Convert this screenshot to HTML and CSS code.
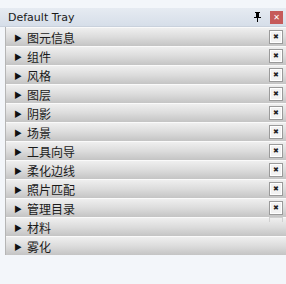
FILE: index.html
```html
<!DOCTYPE html>
<html lang="en">
<head>
    <meta charset="UTF-8">
    <title>Default Tray</title>
    <link rel="stylesheet" href="styles.css">
</head>
<body>
    <div class="tray">
        <div class="title-bar">
            <span class="title">Default Tray</span>
            <span class="pin">
                <svg width="9" height="10" viewBox="0 0 9 10"><path d="M2 0h5v1H6v4h2v1H5v4H4V6H1V5h2V1H2z" fill="#000"/></svg>
            </span>
            <span class="close">&#x2715;</span>
        </div>
        <div class="panels">
            <div class="panel"><span class="arrow">&#9654;</span><span class="label">图元信息</span><span class="x">&#x2716;</span></div>
            <div class="panel"><span class="arrow">&#9654;</span><span class="label">组件</span><span class="x">&#x2716;</span></div>
            <div class="panel"><span class="arrow">&#9654;</span><span class="label">风格</span><span class="x">&#x2716;</span></div>
            <div class="panel"><span class="arrow">&#9654;</span><span class="label">图层</span><span class="x">&#x2716;</span></div>
            <div class="panel"><span class="arrow">&#9654;</span><span class="label">阴影</span><span class="x">&#x2716;</span></div>
            <div class="panel"><span class="arrow">&#9654;</span><span class="label">场景</span><span class="x">&#x2716;</span></div>
            <div class="panel"><span class="arrow">&#9654;</span><span class="label">工具向导</span><span class="x">&#x2716;</span></div>
            <div class="panel"><span class="arrow">&#9654;</span><span class="label">柔化边线</span><span class="x">&#x2716;</span></div>
            <div class="panel"><span class="arrow">&#9654;</span><span class="label">照片匹配</span><span class="x">&#x2716;</span></div>
            <div class="panel"><span class="arrow">&#9654;</span><span class="label">管理目录</span><span class="x">&#x2716;</span></div>
            <div class="panel"><span class="arrow">&#9654;</span><span class="label">材料</span><span class="x partial"></span></div>
            <div class="panel"><span class="arrow">&#9654;</span><span class="label">雾化</span></div>
        </div>
    </div>
</body>
</html>
```

FILE: styles.css
```css
body {
    margin: 0;
    padding-top: 8px;
    background-color: #f3f6fa;
    font-family: "Noto Sans CJK SC", "Liberation Sans", sans-serif;
    width: 286px;
    height: 284px;
    overflow: hidden;
}
.title-bar {
    height: 18px;
    display: flex;
    align-items: center;
    padding-left: 8px;
    padding-right: 3px;
    background: linear-gradient(#e6ebf2, #d6dee9);
    border-bottom: 1px solid #c9d1dc;
}
.title {
    flex: 1;
    font-family: "DejaVu Sans", sans-serif;
    font-size: 11px;
    color: #1a1a1a;
}
.pin {
    display: flex;
    margin-right: 8px;
}
.close {
    width: 13px;
    height: 13px;
    background-color: #c65a5a;
    color: #fff;
    font-size: 8px;
    line-height: 13px;
    text-align: center;
    font-family: "DejaVu Sans", sans-serif;
}
.panels {
    margin-left: 5px;
    border-left: 1px solid #b5b5b5;
}
.panel {
    height: 18px;
    display: flex;
    align-items: center;
    background: linear-gradient(#efefef, #dcdcdc 50%, #c4c4c4);
    border-top: 1px solid #fafafa;
    padding-left: 8px;
    padding-right: 3px;
}
.arrow {
    font-size: 8px;
    color: #111;
    width: 13px;
}
.label {
    flex: 1;
    font-size: 12px;
    color: #1a1a1a;
}
.x {
    width: 12px;
    height: 12px;
    border: 1px solid #9a9a9a;
    background-color: #f2f2f2;
    box-shadow: inset 0 0 0 1px #fff;
    font-size: 7px;
    line-height: 12px;
    text-align: center;
    color: #222;
    font-family: "DejaVu Sans", sans-serif;
}
.x.partial {
    align-self: flex-start;
    height: 4px;
    margin-top: -1px;
    border-bottom: none;
    background: transparent;
    box-shadow: none;
    border-color: #d0d0d0;
}
```
